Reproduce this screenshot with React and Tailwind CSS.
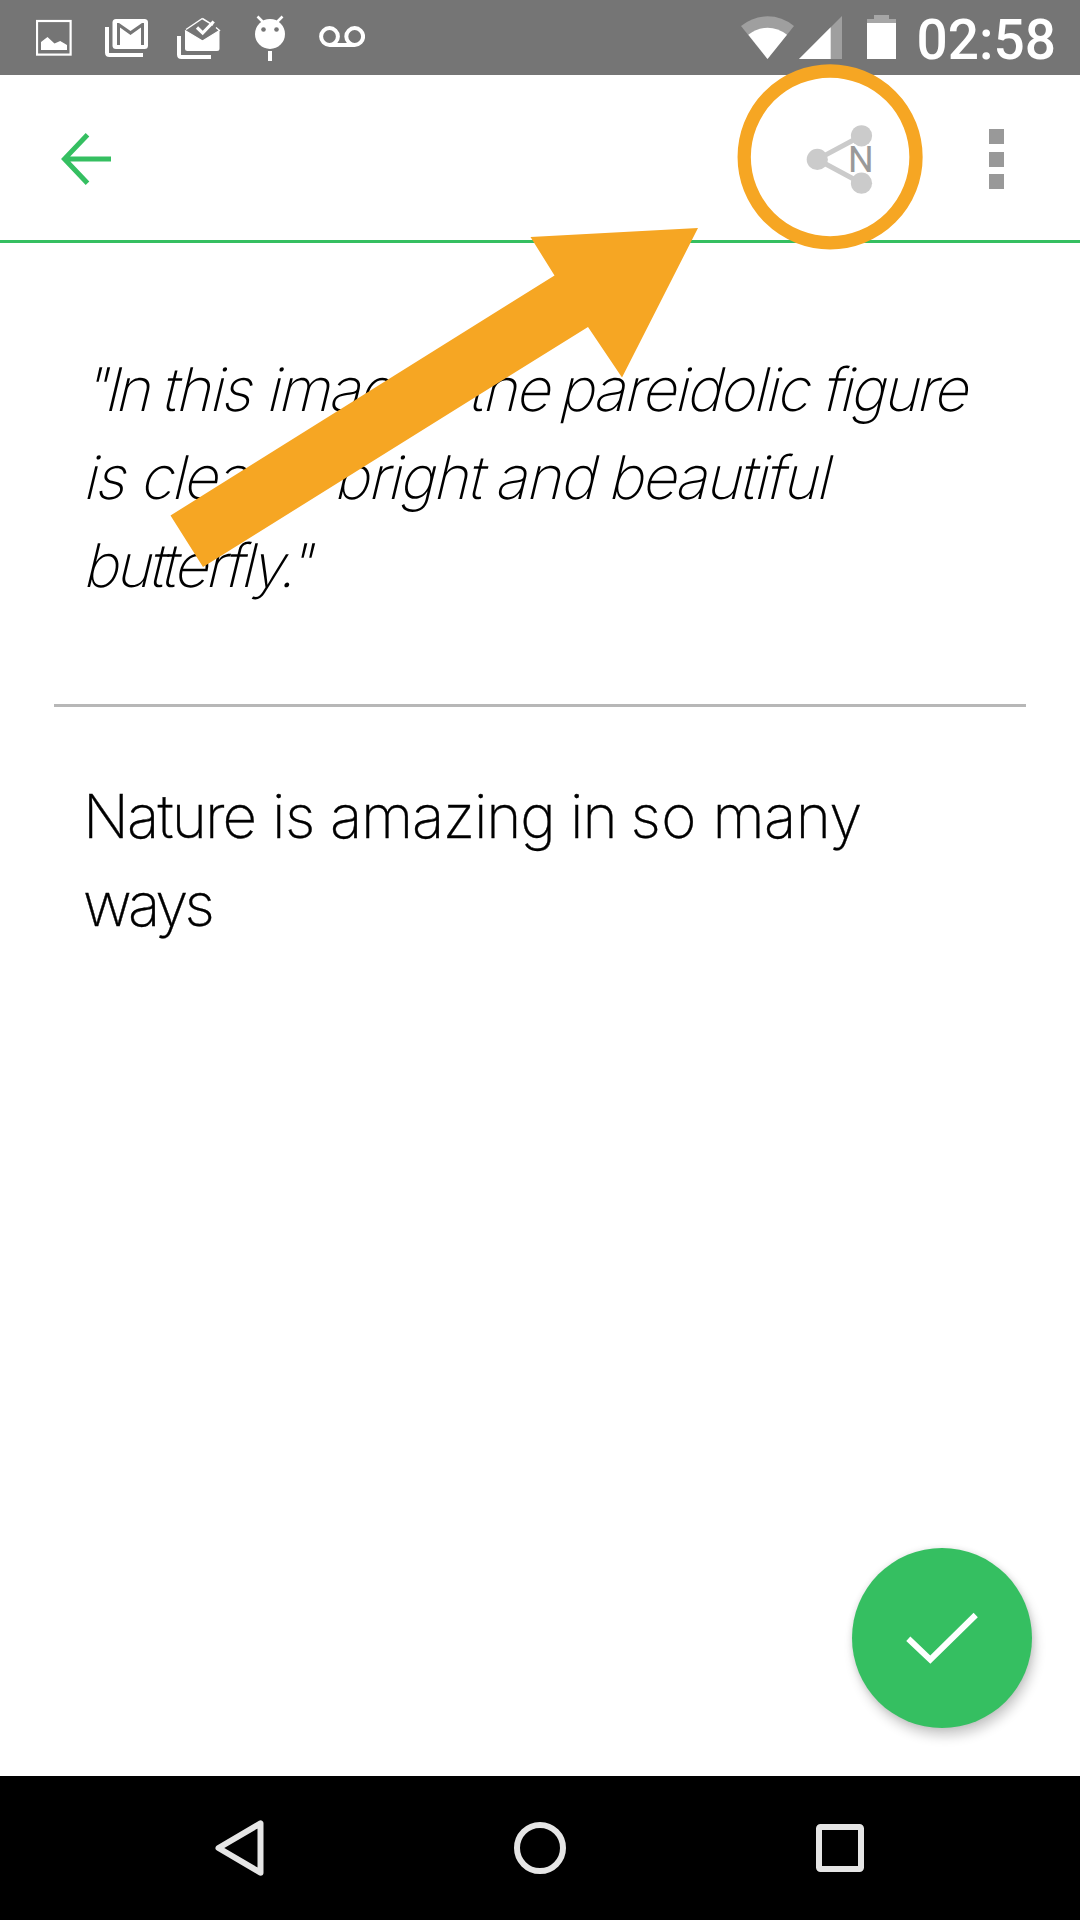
function Word({ w, ls, children }) {
  return (
    <span className="block shrink-0 whitespace-pre" style={{ width: w, letterSpacing: ls }}>
      {children}{" "}
    </span>
  );
}

function Line({ words, slanted }) {
  return (
    <p className={slanted ? "flex h-[88px] origin-[0_66px] -skew-x-[13.4deg]" : "flex h-[88px]"}>
      {words.map(([text, w, ls], i) => (
        <Word key={i} w={w} ls={ls}>{text}</Word>
      ))}
    </p>
  );
}

// Each word: text, advance to the next word, tracking
const quote = [
  [['"In', 78, -4], ["this", 105, -1.5], ["image,", 202, -1.6], ["the", 91, -1.9], ["pareidolic", 263, -1.8], ["figure", 160, -2.3]],
  [["is", 57, -1.5], ["clear,", 145, -1.6], ["a", 49, 0], ["bright", 161, -1.5], ["and", 113, -1.2], ["beautiful", 230, -1.75]],
  [['butterfly."', 240, -2.7]],
];
const body = [
  [["Nature", 189, -1.9], ["is", 58, -0.5], ["amazing", 240, -1.2], ["in", 60.5, -1], ["so", 82, 0.5], ["many", 150, -0.6]],
  [["ways", 140, -3.8]],
];

function StatusBar() {
  return (
    <div className="flex h-[75px] shrink-0 items-center justify-between bg-[#757575] pl-[36px] pr-[24px] text-white">
      <div className="flex h-full items-start">
        <svg className="h-[75px] w-[69px]" viewBox="36 0 69 75">
          <rect x="37" y="21" width="33.6" height="33.6" fill="none" stroke="#fff" strokeWidth="2.200" />
          <path d="M41 50V42l6.5-5 7 6.6 5.7-2.6 6.8 4V50z" fill="#fff" />
        </svg>
        <svg className="h-[75px] w-[72px]" viewBox="105 0 72 75">
          <path d="M107 27V52.500Q107 55 109.500 55H143" fill="none" stroke="#fff" strokeWidth="4" />
          <rect x="112.500" y="19" width="35.500" height="30" rx="3.500" fill="#fff" />
          <path d="M117 45V23H119L130.500 31L142 23H144V45H141V27.500L130.500 35L120 27.500V45z" fill="#757575" />
        </svg>
        <svg className="h-[75px] w-[78px]" viewBox="177 0 78 75">
          <path d="M179 36V54.500Q179 57 181.500 57H211" fill="none" stroke="#fff" strokeWidth="4" />
          <path d="M185 30.500L202.500 41L219.500 30.500V48.500Q219.500 51 217 51H187.500Q185 51 185 48.500z" fill="#fff" />
          <path d="M202.300 18.500L213 25.200M202.300 18.500L186 29.500" fill="none" stroke="#fff" strokeWidth="1.500" />
          <path d="M185 30.500L202.500 41L219.500 30.500L216 27.500" fill="none" stroke="#fff" strokeWidth="1.300" />
          <path d="M197 27.500L202.700 33L213.700 21.500" fill="none" stroke="#fff" strokeWidth="3.200" />
        </svg>
        <svg className="h-[75px] w-[64px]" viewBox="255 0 64 75">
          <circle cx="270" cy="34" r="15" fill="#fff" />
          <path d="M257.500 16.500L263 22M282.500 16.500L277 22" stroke="#fff" strokeWidth="2.600" />
          <circle cx="263.500" cy="29.500" r="2.300" fill="#757575" />
          <circle cx="276.500" cy="29.500" r="2.300" fill="#757575" />
          <rect x="268" y="51" width="4" height="10" fill="#fff" />
        </svg>
        <svg className="h-[75px] w-[46px]" viewBox="319 0 46 75">
          <g fill="none" stroke="#fff" strokeWidth="4">
            <circle cx="329.500" cy="36.500" r="8.400" />
            <circle cx="354.700" cy="36.500" r="8.400" />
            <path d="M329.500 45H354.700" />
          </g>
        </svg>
      </div>
      <div className="flex h-full items-start">
        <svg className="h-[75px] w-[58px]" viewBox="741 0 58 75">
          <path d="M767.500 59L741 26Q753 16.300 767.500 16.300T794 26z" fill="#9f9f9f" />
          <path d="M767.500 59L748.300 34.800Q757 27.800 767.500 27.800T787 34.800z" fill="#fff" />
        </svg>
        <svg className="h-[75px] w-[68px]" viewBox="799 0 68 75">
          <path d="M799 59L842 16V59z" fill="#9f9f9f" />
          <path d="M799 59L830.700 27.300V59z" fill="#fff" />
        </svg>
        <svg className="h-[75px] w-[49.5px]" viewBox="867 0 49.5 75">
          <path d="M867 59V19H874V15H889V19H896V59z" fill="#a6a6a6" />
          <rect x="867" y="23" width="29" height="36" fill="#fff" />
        </svg>
        <span className="block font-['Roboto',sans-serif] text-[55px] leading-[81px] font-medium">02:58</span>
      </div>
    </div>
  );
}

function Toolbar() {
  return (
    <header className="flex h-[168px] shrink-0 items-center justify-between border-b-[3px] border-[#35bf61] pt-[3px] pl-[60px] pr-[76px]">
      <button className="h-[60px] w-[60px]" aria-label="Back">
        <svg className="h-[60px] w-[60px]" viewBox="60 129 60 60" fill="none" stroke="#35bf61" strokeWidth="5">
          <path d="M111 159H65M87.500 134.700L64.500 158.900L87.500 183.200" />
        </svg>
      </button>
      <div className="flex items-center gap-[111px]">
        <button aria-label="Share">
          <svg className="h-[72px] w-[72px]" viewBox="806 123 72 72">
            <g fill="#cbcbcb" stroke="#cbcbcb">
              <path d="M861.500 135.800L817.300 159.400L861.500 183.200" fill="none" strokeWidth="5" />
              <circle cx="817.300" cy="159.400" r="10.600" stroke="none" />
              <circle cx="861.500" cy="135.800" r="10.600" stroke="none" />
              <circle cx="861.500" cy="183.200" r="10.600" stroke="none" />
            </g>
            <text x="848" y="172" fontFamily="Roboto, sans-serif" fontSize="36" fill="#999">N</text>
          </svg>
        </button>
        <button className="flex flex-col gap-[7.5px]" aria-label="More">
          <i className="block h-[15px] w-[15px] bg-[#999]" />
          <i className="block h-[15px] w-[15px] bg-[#999]" />
          <i className="block h-[15px] w-[15px] bg-[#999]" />
        </button>
      </div>
    </header>
  );
}

function NavBar() {
  return (
    <nav className="flex h-[144px] shrink-0 items-center justify-between bg-black px-[210px]">
      <svg className="h-[60px] w-[60px]" viewBox="210 1818 60 60" fill="none" stroke="#e5e5e5" strokeWidth="6" strokeLinejoin="round">
        <path d="M218.500 1848L260.500 1823.300V1872.700z" />
      </svg>
      <svg className="h-[60px] w-[60px]" viewBox="510 1818 60 60" fill="none" stroke="#e5e5e5" strokeWidth="6">
        <circle cx="540" cy="1848" r="23" />
      </svg>
      <svg className="h-[60px] w-[60px]" viewBox="810 1818 60 60" fill="none" stroke="#e5e5e5" strokeWidth="6">
        <rect x="819" y="1827" width="42" height="42" rx="1.500" />
      </svg>
    </nav>
  );
}

export default function App() {
  return (
    <div className="relative flex h-[1920px] w-[1080px] flex-col overflow-hidden bg-white">
      <StatusBar />
      <Toolbar />
      <main className="flex flex-1 flex-col px-[54px] font-['Inter',sans-serif] text-[60px] leading-[88px] font-extralight text-black">
        <div className="mt-[102px] pl-[28px]">
          {quote.map((words, i) => <Line key={i} words={words} slanted />)}
        </div>
        <hr className="mt-[95px] w-[972px] border-0 border-t-[3px] border-[#b7b7b7]" />
        <div className="mt-[65px] pl-[29px] [-webkit-text-stroke:0.35px_#000]">
          {body.map((words, i) => <Line key={i} words={words} />)}
        </div>
      </main>
      <NavBar />
      <button className="absolute left-[852px] top-[1548px] flex h-[180px] w-[180px] items-center justify-center rounded-full bg-[#35bf61] shadow-[3px_8px_12px_rgba(0,0,0,0.2),0_0_6px_rgba(0,0,0,0.1)]" aria-label="Save">
        <svg className="h-[90px] w-[90px]" viewBox="897 1593 90 90" fill="none" stroke="#fff" strokeWidth="6">
          <path d="M908.300 1638.700L930.300 1659.600L975.700 1615" />
        </svg>
      </button>
      <svg className="pointer-events-none absolute left-0 top-0 h-[600px] w-[1080px]" viewBox="0 0 1080 600">
        <path d="M530.500 237L698 228L622 377.500L588 327L203 567L170.500 515.500L554.500 275.500z" fill="#f6a623" />
        <circle cx="830.100" cy="156.900" r="85.900" fill="none" stroke="#f6a623" strokeWidth="13.300" />
      </svg>
    </div>
  );
}
